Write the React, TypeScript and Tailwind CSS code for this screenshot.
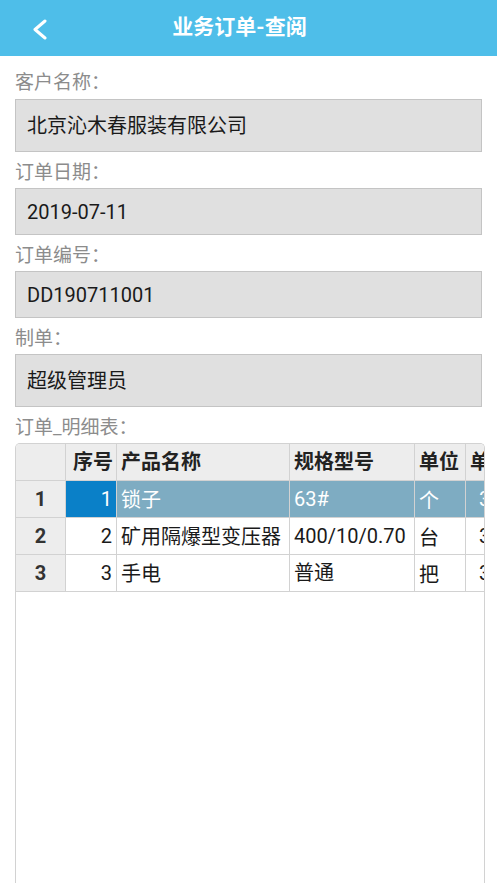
import React from 'react'

const cjk = { fontFamily: 'Roboto, "Noto Sans CJK SC", sans-serif' }

const fields = [
  { label: '客户名称：', value: '北京沁木春服装有限公司', tall: true, first: true },
  { label: '订单日期：', value: '2019-07-11', tall: false, first: false },
  { label: '订单编号：', value: 'DD190711001', tall: false, first: false },
  { label: '制单：', value: '超级管理员', tall: true, first: false },
]

const rows = [
  { no: '1', name: '锁子', spec: '63#', unit: '个', price: '35' },
  { no: '2', name: '矿用隔爆型变压器', spec: '400/10/0.70', unit: '台', price: '35' },
  { no: '3', name: '手电', spec: '普通', unit: '把', price: '35' },
]

function Label({ text, first }: { text: string; first?: boolean }) {
  return (
    <div
      className={`flex items-center text-[19px] leading-none text-[#8c8c8c] ${first ? 'h-[43px] pt-[10px]' : 'h-[36px] pt-[4px]'}`}
    >
      {text}
    </div>
  )
}

export default function App() {
  return (
    <div className="flex h-[883px] w-[497px] flex-col overflow-hidden bg-white" style={cjk}>
      {/* Title bar */}
      <div className="relative flex h-[56px] shrink-0 items-center justify-center bg-[#4ebee9] pr-[18px]">
        <svg className="absolute left-[31px] top-[19px]" width="18" height="21" viewBox="0 0 18 21">
          <polyline
            points="14,2 4,10.5 14,19"
            fill="none"
            stroke="white"
            strokeWidth="3"
            strokeLinecap="round"
            strokeLinejoin="round"
          />
        </svg>
        <span className="text-[21px] font-bold text-white">业务订单-查阅</span>
      </div>

      <div className="flex flex-1 flex-col px-[15px]">
        {fields.map((f) => (
          <div key={f.label}>
            <Label text={f.label} first={f.first} />
            <div
              className={`flex w-[467px] items-center border border-[#c4c4c4] bg-[#e0e0e0] pl-[11px] text-[20px] text-[#1a1a1a] ${f.tall ? 'h-[53px]' : 'h-[47px]'}`}
            >
              {f.value}
            </div>
          </div>
        ))}

        <Label text="订单_明细表：" />

        {/* Detail grid, last column clipped by the view */}
        <div className="flex w-[470px] flex-1 flex-col overflow-hidden rounded-t-[5px] border-x border-t border-[#d2d2d2]">
          <div className="flex h-[37px] shrink-0 border-b border-[#d2d2d2] bg-[#ededed] text-[20px] font-bold text-[#222]">
            <div className="w-[50px] shrink-0 border-r border-[#d2d2d2]" />
            <div className="flex w-[51px] shrink-0 items-center justify-end border-r border-[#d2d2d2] pr-[3px]">序号</div>
            <div className="flex w-[173px] shrink-0 items-center border-r border-[#d2d2d2] pl-[4px]">产品名称</div>
            <div className="flex w-[125px] shrink-0 items-center border-r border-[#d2d2d2] pl-[4px]">规格型号</div>
            <div className="flex w-[51px] shrink-0 items-center border-r border-[#d2d2d2] pl-[4px]">单位</div>
            <div className="flex w-[60px] shrink-0 items-center pl-[4px]">单价</div>
          </div>

          {rows.map((r, i) => {
            const selected = i === 0
            return (
              <div
                key={r.no}
                className={`flex h-[37px] shrink-0 border-b border-[#d2d2d2] text-[20px] ${selected ? 'bg-[#7eacc2] text-white' : 'bg-white text-[#1a1a1a]'}`}
              >
                <div className="flex w-[50px] shrink-0 items-center justify-center border-r border-[#d2d2d2] bg-[#ededed] font-bold text-[#333]">
                  {r.no}
                </div>
                <div
                  className={`flex w-[51px] shrink-0 items-start justify-end border-r border-[#d2d2d2] pr-[4px] pt-[3px] ${selected ? 'bg-[#0a80c8]' : ''}`}
                >
                  {r.no}
                </div>
                <div className="flex w-[173px] shrink-0 items-center border-r border-[#d2d2d2] pl-[4px] pt-[2px]">{r.name}</div>
                <div className="flex w-[125px] shrink-0 items-start border-r border-[#d2d2d2] pl-[4px] pt-[3px]">{r.spec}</div>
                <div className="flex w-[51px] shrink-0 items-center border-r border-[#d2d2d2] pl-[4px] pt-[4px]">{r.unit}</div>
                <div className="flex w-[60px] shrink-0 items-start pl-[13px] pt-[3px]">{r.price}</div>
              </div>
            )
          })}

          <div className="flex-1 bg-white" />
        </div>
      </div>
    </div>
  )
}
